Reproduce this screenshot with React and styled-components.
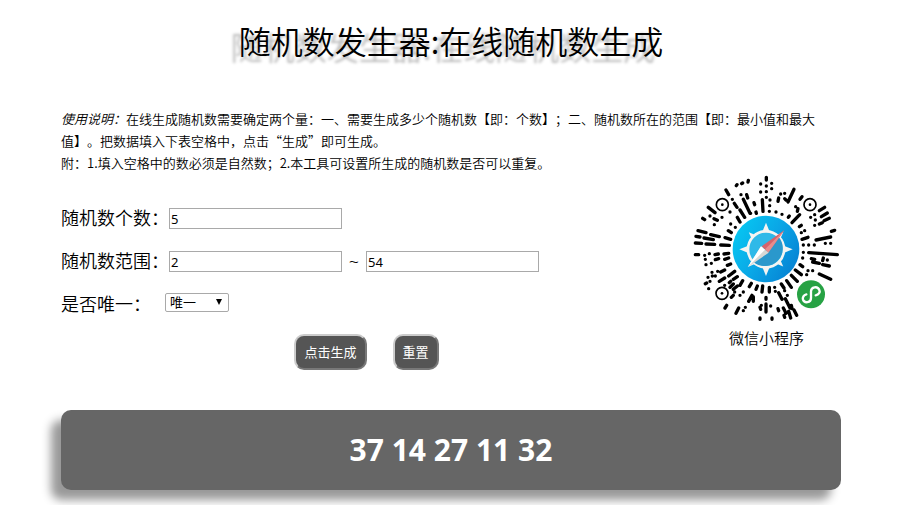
import { useState } from "react"
import styled, { createGlobalStyle } from "styled-components"

const START = { count: "5", min: "2", max: "54", unique: "yes" }

const App = () => {
    const [form, setForm] = useState(START)
    const [numbers, setNumbers] = useState([37, 14, 27, 11, 32])

    const change = (e) => setForm({ ...form, [e.target.name]: e.target.value })

    const generate = (e) => {
        e.preventDefault()
        const min = Number(form.min)
        const span = Number(form.max) - min + 1
        const count = Number(form.count)
        const unique = form.unique === "yes"
        if (!(span > 0) || (unique && count > span)) return
        const result = []
        while (result.length < count) {
            const n = min + Math.floor(Math.random() * span)
            if (!unique || !result.includes(n)) result.push(n)
        }
        setNumbers(result)
    }

    return (
        <Page lang="zh-CN">
            <GlobalStyle />
            <Title>随机数发生器:在线随机数生成</Title>
            <Notes>
                <em>使用说明：</em>在线生成随机数需要确定两个量：一、需要生成多少个随机数【即：个数】；二、随机数所在的范围【即：最小值和最大值】。把数据填入下表空格中，点击“生成”即可生成。
                <br />
                附：1.填入空格中的数必须是自然数；2.本工具可设置所生成的随机数是否可以重复。
            </Notes>
            <Tool>
                <Form onSubmit={generate} onReset={() => setForm(START)}>
                    <Row>
                        <Label htmlFor="count">随机数个数：</Label>
                        <Input id="count" name="count" value={form.count} onChange={change} />
                    </Row>
                    <Row>
                        <Label htmlFor="min">随机数范围：</Label>
                        <Input id="min" name="min" value={form.min} onChange={change} />
                        <Tilde>~</Tilde>
                        <Input name="max" aria-label="最大值" value={form.max} onChange={change} />
                    </Row>
                    <Row>
                        <Label htmlFor="unique">是否唯一：</Label>
                        <SelectBox>
                            <Select id="unique" name="unique" value={form.unique} onChange={change}>
                                <option value="yes">唯一</option>
                                <option value="no">不唯一</option>
                            </Select>
                            <Arrow viewBox="0 0 6 6"><path d="M0 0h6L3 6z" /></Arrow>
                        </SelectBox>
                    </Row>
                    <Buttons>
                        <Button type="submit">点击生成</Button>
                        <Button type="reset">重置</Button>
                    </Buttons>
                </Form>
                <Figure>
                    <MiniCode />
                    <figcaption>微信小程序</figcaption>
                </Figure>
            </Tool>
            <Result>{numbers.join(" ")}</Result>
        </Page>
    )
}

// rays of the code, one path per part of the circle
const RAYS = {
    topLeft: "M139 35l2-3M155 29l3-2M174 24l1-5M108 48l8 14M127 76h0M153 62h0M170 62l3 10M160 76l20 42M192 86l2 6M133 88l8 12M217 77l2 35M212 30h0M212 54h0M55 100l20 16M120 114h0M60 126h0M72 134l10 5M96 130h0M38 133l6 4M73 152h0M122 150h0M150 108l14 22M142 130l8 14M136 160h0M198 114l1 4M182 118h0M24 170l24 6M62 182l26 6M115 170l9 6M18 187l12 2M42 192l28 5M105 191l17 5M16 207l19 1M48 210l26 1M92 213l26 1",
    topRight: "M7 10v8M7 36h0M7 53h0M7 70h0M18 78h0M17 95h0M23 28h0M23 44h0M50 60h0M62 58h0M44 72l-2 10M62 74l4 4M90 46l-18 38M114 68l-6 8M95 98h0M102 104l-2 8M16 112h0M36 114h0M54 121h0M76 126l-3 4M107 122l-23 24M182 100l-16 10M190 117l-18 11M196 133l-16 7M152 122h0M140 130h0M154 138h0M152 154h0M175 146l-9 4M212 169l-10 3M112 154l-6 4M122 170h0M112 176h0M132 190l-18 6M200 189l-44 9M118 213h0M134 213h0M151 213h0M184 208h0M200 208h0",
    bottom: "M16 20h10M44 22h0M58 17h0M75 20l10-2M102 18l14-2M46 34h0M48 50h0M64 46h0M76 35l10-3M104 34l12-4M66 73h0M67 84h0M54 88h0M83 70h0M92 72l12-6M112 52l10-4M46 107l4-2M56 122h0M60 100h0M76 84h0M88 100l16-10M116 84l18-14M104 112h0M118 104l4-4M130 94l12-8M120 118l10-10M130 124l12-10M134 132h0M124 148l6-6M105 180l5-8M150 112l8-14M150 142h0M160 132h0M138 196l8-16M176 160l10-18M190 146v14M166 178h0M160 188h0M178 116l6-10M198 124l4-10M216 132l2-18M238 118v14M210 178l2 6M210 210v4M246 210v4M228 148v6M228 168v24M214 172h0M242 174h0M254 118h0M256 130h0M266 134l10 20M264 182l2 6M274 108l8 12M280 180l8 16M284 128h0M292 142h0M286 152l14 28M304 172l2 10M296 190l6 20M312 186l8 16M282 202l2 6M290 98l14 20M304 82l18 18M316 66l18 14M330 50l8 6M340 13h0M356 14l86 6M338 30h0M364 32l10 2M368 42l20 4M400 30l-2 8M412 36h0M398 50l20 4M354 68h0M368 68h0M350 80h0M388 78l34 16",
}

const TICKS = [0, 45, 90, 135, 180, 225, 270, 315]

const MiniCode = () => (
    <Code viewBox="21 12 447 447" role="img" aria-label="微信小程序">
        <defs>
            <linearGradient id="sky" x1="0" y1="0.2" x2="1" y2="0.8">
                <stop offset="0" stopColor="#06c8f2" />
                <stop offset="0.5" stopColor="#0aa6e6" />
                <stop offset="1" stopColor="#0580d2" />
            </linearGradient>
        </defs>
        <g fill="none" stroke="#000" strokeWidth="10" strokeLinecap="round">
            <path transform="translate(15 12)" d={RAYS.topLeft} />
            <path transform="translate(237 12)" d={RAYS.topRight} />
            <path transform="translate(15 234)" d={RAYS.bottom} />
        </g>
        {[[112, 104], [375, 104], [111, 370]].map(([x, y]) => (
            <g key={`${x}-${y}`}>
                <circle cx={x} cy={y} r="18" fill="#fff" stroke="#000" strokeWidth="5" />
                <circle cx={x} cy={y} r="4" />
            </g>
        ))}
        <circle cx="243" cy="237" r="100" fill="url(#sky)" />
        <circle cx="243" cy="238" r="54" fill="#2fb9e8" stroke="#f4f4f2" strokeWidth="8" />
        <path d="M281 200a54 54 0 0 1-76 76z" fill="#2a98cc" />
        {TICKS.map((deg) => (
            <path
                key={deg}
                transform={`rotate(${deg} 243 238)`}
                fill="#f4f4f2"
                d={deg % 90 ? "M235 185l8-20 8 20z" : "M232 185l11-27 11 27z"}
            />
        ))}
        <path d="M298 181L230 229l20 18z" fill="#d5636b" />
        <path d="M298 181L240 238l10 10z" fill="#e78c8c" />
        <path d="M188 292L228 229l23 19z" fill="#d8d8d5" />
        <path d="M188 292L228 229l12 10z" fill="#fff" />
        <circle cx="378" cy="373" r="42" fill="#27a244" />
        <path
            d="M392 376C402 374 406 366 403 360C398 347 378 350 378 364V384C378 399 358 401 354 389C352 382 356 375 364 373"
            fill="none"
            stroke="#fff"
            strokeWidth="7"
            strokeLinecap="round"
        />
    </Code>
)

const GlobalStyle = createGlobalStyle`
    body {
        margin: 0;
        background: #fff;
        color: #000;
        font-family: "Noto Sans CJK SC", "Noto Sans", sans-serif;
        font-weight: 350;
        text-spacing-trim: space-all;
    }

    input, select, button {
        font-family: "Noto Sans", "Noto Sans CJK SC", sans-serif;
        font-size: 13px;
        box-sizing: border-box;
    }
`

const Page = styled.main`
    padding: 18px 58px 15px 61px;
`

const Title = styled.h1`
    margin: 0 0 46px;
    font-size: 32px;
    font-weight: 350;
    line-height: 44px;
    text-align: center;
    text-shadow: -8px 6px 3px #bbb;
`

const Notes = styled.p`
    margin: 0;
    font-size: 13px;
    line-height: 22px;
`

const Tool = styled.section`
    display: grid;
    grid-template-columns: 1fr 149px;
    column-gap: 20px;
`

const Form = styled.form`
    padding-top: 22px;
`

const Row = styled.div`
    display: flex;
    align-items: center;
    height: 43px;
    font-size: 18px;
`

const Label = styled.label`
    padding-bottom: 2px;
`

const Input = styled.input`
    width: 173px;
    height: 21px;
    margin: 2px 0 0;
    padding: 1px;
    border: 1px solid #a9a9a9;
    border-radius: 0;
    background: #fff;
`

const Tilde = styled.span`
    width: 24px;
    font-family: "Noto Sans", sans-serif;
    text-align: center;
`

const SelectBox = styled.div`
    position: relative;
    display: flex;
    margin: 0 0 2px 14px;
`

const Select = styled.select`
    width: 64px;
    height: 19px;
    padding: 0 4px;
    border: 1px solid #a9a9a9;
    border-radius: 2px;
    background: #fff;
    color: #000;
    line-height: 17px;
    appearance: none;
`

const Arrow = styled.svg`
    position: absolute;
    top: 6px;
    right: 7px;
    width: 6px;
    height: 6px;
    pointer-events: none;
`

const Buttons = styled.div`
    display: flex;
    justify-content: center;
    gap: 26px;
    margin-top: 9px;
`

const Button = styled.button`
    height: 36px;
    padding: 0 8px 2px;
    border: 2px outset #ccc;
    border-radius: 10px;
    background: #555;
    color: #fff;
    cursor: pointer;
`

const Figure = styled.figure`
    margin: 0;
    font-size: 15px;
    line-height: 30px;
    text-align: center;
`

const Code = styled.svg`
    display: block;
    width: 100%;
`

const Result = styled.div`
    margin-top: 40px;
    border-radius: 10px;
    background: #666;
    box-shadow: -10px 10px 10px #999;
    color: #fff;
    font-family: "Noto Sans", "Noto Sans CJK SC", sans-serif;
    font-size: 30px;
    font-weight: bold;
    line-height: 80px;
    text-align: center;
`

export default App
